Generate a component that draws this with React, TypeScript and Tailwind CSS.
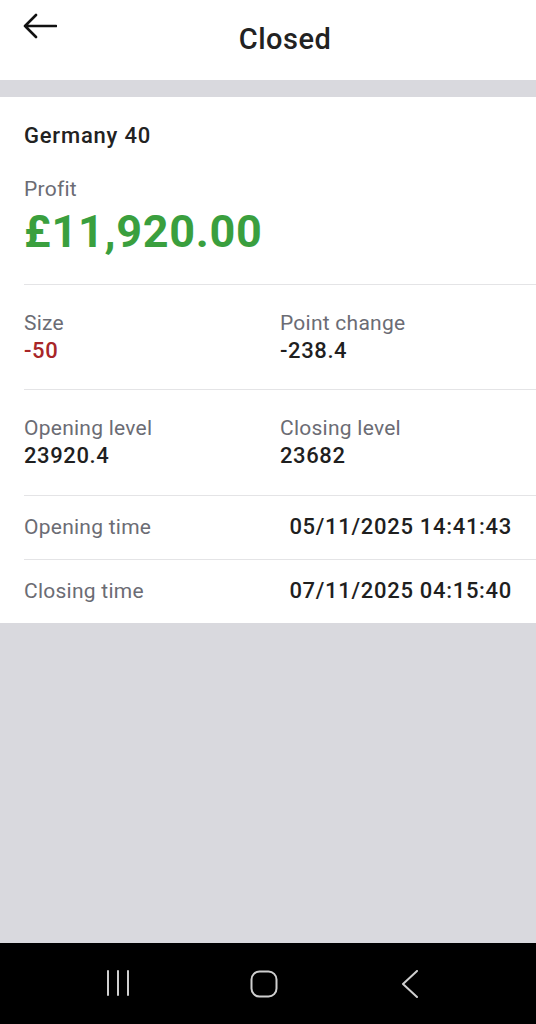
import React from 'react';

const FONT = { fontFamily: 'Roboto, "Noto Sans", sans-serif' };

// --- STAT CELL ---
const Stat: React.FC<{ label: string; value: string; valueClass?: string }> = ({ label, value, valueClass }) => (
  <div className="flex flex-col">
    <span className="text-[21px] leading-[28px] tracking-[0.25px] text-[#6b6c74]">{label}</span>
    <span className={`text-[22px] leading-[28px] tracking-[0.6px] font-medium ${valueClass ?? 'text-[#1f1f1f]'}`}>{value}</span>
  </div>
);

// --- TIME ROW ---
const TimeRow: React.FC<{ label: string; value: string }> = ({ label, value }) => (
  <div className="flex justify-between items-center pr-6 pt-[17px] pb-[18px] border-t border-[#e4e4e6]">
    <span className="text-[21px] leading-[28px] tracking-[0.25px] text-[#6b6c74]">{label}</span>
    <span className="text-[22px] leading-[28px] tracking-[0.7px] font-medium text-[#1f1f1f]">{value}</span>
  </div>
);

const NavBar: React.FC = () => (
  <div className="h-[81px] bg-black flex justify-center items-start pt-[27px] pr-[8px]">
    <div className="w-[146px] flex justify-center">
      <svg width="24" height="26" viewBox="0 0 24 26" fill="none" stroke="#cfcfcf" strokeWidth="2" strokeLinecap="round">
        <path d="M2 1v24M12 1v24M22 1v24" />
      </svg>
    </div>
    <div className="w-[146px] flex justify-center">
      <svg width="28" height="28" viewBox="0 0 28 28" fill="none" stroke="#cfcfcf" strokeWidth="2">
        <rect x="1.5" y="1.5" width="25" height="25" rx="8" />
      </svg>
    </div>
    <div className="w-[146px] flex justify-center">
      <svg width="18" height="28" viewBox="0 0 18 28" fill="none" stroke="#cfcfcf" strokeWidth="2" strokeLinecap="round" strokeLinejoin="round">
        <path d="M16 1L2 14l14 13" />
      </svg>
    </div>
  </div>
);

export default function App() {
  return (
    <div className="w-[536px] h-[1024px] flex flex-col bg-[#d9d9de] overflow-hidden" style={FONT}>
      {/* header */}
      <div className="h-[80px] bg-white flex items-start px-[23px] shrink-0">
        <svg className="mt-[13px]" width="34" height="26" viewBox="0 0 34 26" fill="none" stroke="#111" strokeWidth="2.6" strokeLinecap="round" strokeLinejoin="round">
          <path d="M33 13H2M13 2L2 13l11 11" />
        </svg>
        <h1 className="flex-1 text-center mt-[21px] text-[29px] leading-[36px] tracking-[0.5px] font-medium text-[#222]">Closed</h1>
      </div>

      {/* card */}
      <div className="mt-[17px] bg-white pl-6 shrink-0">
        <div className="pt-[25px] pb-[26px]">
          <div className="text-[22px] leading-[28px] tracking-[0.8px] font-medium text-[#222]">Germany 40</div>
          <div className="mt-[25px] text-[21px] leading-[28px] tracking-[0.25px] text-[#6b6c74]">Profit</div>
          <div className="mt-[3px] text-[45px] leading-[52px] tracking-[0.7px] font-bold text-[#3a9f3e]">£11,920.00</div>
        </div>
        <div className="grid grid-cols-2 py-6 border-t border-[#e4e4e6]">
          <Stat label="Size" value="-50" valueClass="text-[#a82628]" />
          <Stat label="Point change" value="-238.4" />
        </div>
        <div className="grid grid-cols-2 pt-6 pb-[25px] border-t border-[#e4e4e6]">
          <Stat label="Opening level" value="23920.4" />
          <Stat label="Closing level" value="23682" />
        </div>
        <TimeRow label="Opening time" value="05/11/2025 14:41:43" />
        <TimeRow label="Closing time" value="07/11/2025 04:15:40" />
      </div>

      <div className="flex-1" />
      <NavBar />
    </div>
  );
}
